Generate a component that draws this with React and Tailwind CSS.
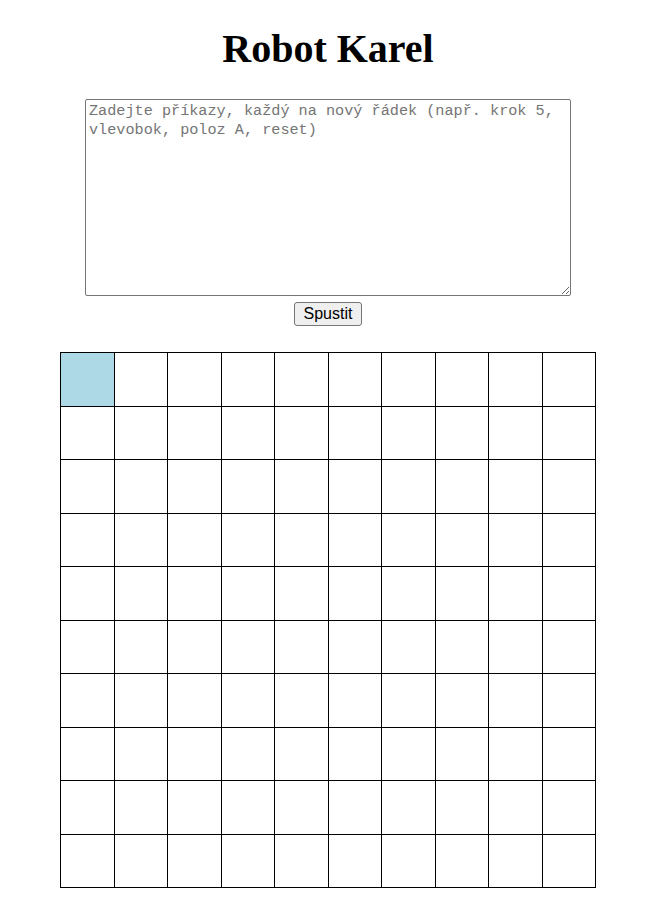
export default function App() {
  const cells = Array.from({ length: 100 }, (_, i) => i)

  return (
    <div className="min-h-screen bg-white flex flex-col items-center pr-[7px]">
      <h1 className="mt-[26px] text-[40px] leading-[46px] font-bold text-black font-['Liberation_Serif',serif]">
        Robot Karel
      </h1>
      <textarea
        className="mt-[27px] w-[486px] h-[197px] border border-[#767676] rounded-[2px] px-[3px] py-[2px] text-[15.2px] leading-[19px] font-['Liberation_Mono',monospace] text-black placeholder:text-[#757575] resize-y"
        placeholder="Zadejte příkazy, každý na nový řádek (např. krok 5, vlevobok, poloz A, reset)"
      />
      <button className="mt-[6px] h-[24px] px-[9px] bg-[#efefef] border border-[#767676] rounded-[3px] text-[16px] leading-[20px] text-black font-['Liberation_Sans',Arial,sans-serif]">
        Spustit
      </button>
      <div className="mt-[26px] w-[536px] grid grid-cols-10 border-l border-t border-black">
        {cells.map(i => (
          <div
            key={i}
            className={`h-[53.5px] border-r border-b border-black ${i === 0 ? 'bg-[#add8e6]' : 'bg-white'}`}
          />
        ))}
      </div>
    </div>
  )
}
